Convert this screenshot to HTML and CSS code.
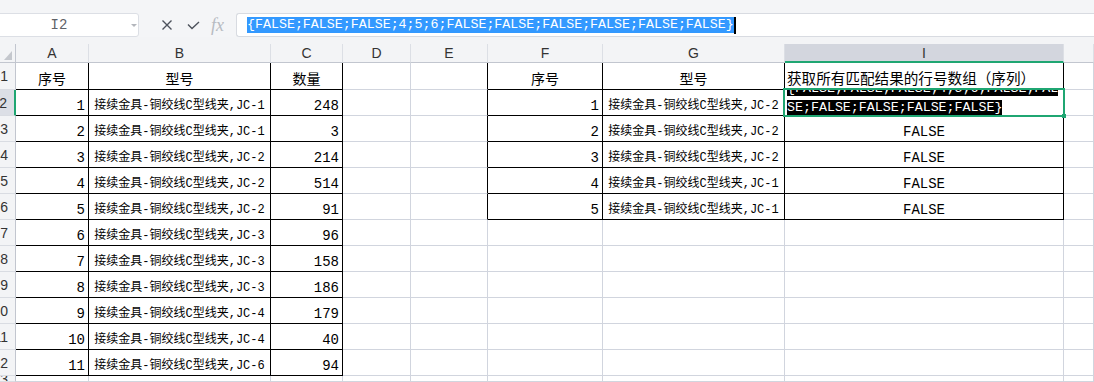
FILE: index.html
```html
<!DOCTYPE html>
<html lang="zh">
<head>
<meta charset="utf-8">
<title>Sheet</title>
<link rel="stylesheet" href="styles.css">
</head>
<body>
<div class="fbar">
  <div class="namebox">
    <span class="ref">I2</span>
    <span class="dd"><svg width="6" height="3" viewBox="0 0 6 3"><path d="M0 0H6L3 3Z" fill="#b3b6bc"/></svg></span>
  </div>
  <div class="tools">
    <svg class="x" width="12" height="12" viewBox="0 0 12 12"><path d="M1.5 1.5L10.5 10.5M10.5 1.5L1.5 10.5" stroke="#4d525c" stroke-width="1.4" fill="none"/></svg>
    <svg class="ok" width="13" height="9" viewBox="0 0 13 9"><path d="M1 3.5L5 7.5L12 1" stroke="#4d525c" stroke-width="1.4" fill="none"/></svg>
    <span class="fx">fx</span>
  </div>
  <div class="finput"><span class="sel">{FALSE;FALSE;FALSE;4;5;6;FALSE;FALSE;FALSE;FALSE;FALSE;FALSE}</span><span class="caret"></span></div>
</div>
<div class="sheet">
  <div class="row hdr">
    <div class="corner"><svg width="8" height="9" viewBox="0 0 8 9"><path d="M8 0V9H0Z" fill="#c4c7cd"/></svg></div>
    <div>A</div><div>B</div><div>C</div><div>D</div><div>E</div><div>F</div><div>G</div><div class="on">I</div><div></div>
  </div>
  <div class="row r1">
    <div class="rh">1</div>
    <div class="t ctr">序号</div>
    <div class="t ctr">型号</div>
    <div class="t ctr">数量</div>
    <div></div>
    <div class="tl"></div>
    <div class="t ctr">序号</div>
    <div class="t ctr">型号</div>
    <div class="t i1">获取所有匹配结果的行号数组（序列）</div>
    <div></div>
  </div>
  <div class="row">
    <div class="rh cur">2</div>
    <div class="t num">1</div>
    <div class="t ctr sm">接续金具-铜绞线C型线夹,JC-1</div>
    <div class="t num">248</div>
    <div></div>
    <div class="tl"></div>
    <div class="t num">1</div>
    <div class="t ctr sm">接续金具-铜绞线C型线夹,JC-2</div>
    <div class="t act"><div class="wrap"><div class="txt"><span class="hl">{FALSE;FALSE;FALSE;4;5;6;FALSE;FAL<br>SE;FALSE;FALSE;FALSE;FALSE}</span></div></div></div>
    <div></div>
  </div>
  <div class="row">
    <div class="rh">3</div>
    <div class="t num">2</div>
    <div class="t ctr sm">接续金具-铜绞线C型线夹,JC-1</div>
    <div class="t num">3</div>
    <div></div>
    <div class="tl"></div>
    <div class="t num">2</div>
    <div class="t ctr sm">接续金具-铜绞线C型线夹,JC-2</div>
    <div class="t ctr">FALSE</div>
    <div></div>
  </div>
  <div class="row">
    <div class="rh">4</div>
    <div class="t num">3</div>
    <div class="t ctr sm">接续金具-铜绞线C型线夹,JC-2</div>
    <div class="t num">214</div>
    <div></div>
    <div class="tl"></div>
    <div class="t num">3</div>
    <div class="t ctr sm">接续金具-铜绞线C型线夹,JC-2</div>
    <div class="t ctr">FALSE</div>
    <div></div>
  </div>
  <div class="row">
    <div class="rh">5</div>
    <div class="t num">4</div>
    <div class="t ctr sm">接续金具-铜绞线C型线夹,JC-2</div>
    <div class="t num">514</div>
    <div></div>
    <div class="tl"></div>
    <div class="t num">4</div>
    <div class="t ctr sm">接续金具-铜绞线C型线夹,JC-1</div>
    <div class="t ctr">FALSE</div>
    <div></div>
  </div>
  <div class="row">
    <div class="rh">6</div>
    <div class="t num">5</div>
    <div class="t ctr sm">接续金具-铜绞线C型线夹,JC-2</div>
    <div class="t num">91</div>
    <div></div>
    <div class="tl"></div>
    <div class="t num">5</div>
    <div class="t ctr sm">接续金具-铜绞线C型线夹,JC-1</div>
    <div class="t ctr">FALSE</div>
    <div></div>
  </div>
  <div class="row">
    <div class="rh">7</div>
    <div class="t num">6</div>
    <div class="t ctr sm">接续金具-铜绞线C型线夹,JC-3</div>
    <div class="t num">96</div>
    <div></div><div></div><div></div><div></div><div></div><div></div>
  </div>
  <div class="row">
    <div class="rh">8</div>
    <div class="t num">7</div>
    <div class="t ctr sm">接续金具-铜绞线C型线夹,JC-3</div>
    <div class="t num">158</div>
    <div></div><div></div><div></div><div></div><div></div><div></div>
  </div>
  <div class="row">
    <div class="rh">9</div>
    <div class="t num">8</div>
    <div class="t ctr sm">接续金具-铜绞线C型线夹,JC-3</div>
    <div class="t num">186</div>
    <div></div><div></div><div></div><div></div><div></div><div></div>
  </div>
  <div class="row">
    <div class="rh">10</div>
    <div class="t num">9</div>
    <div class="t ctr sm">接续金具-铜绞线C型线夹,JC-4</div>
    <div class="t num">179</div>
    <div></div><div></div><div></div><div></div><div></div><div></div>
  </div>
  <div class="row">
    <div class="rh">11</div>
    <div class="t num">10</div>
    <div class="t ctr sm">接续金具-铜绞线C型线夹,JC-4</div>
    <div class="t num">40</div>
    <div></div><div></div><div></div><div></div><div></div><div></div>
  </div>
  <div class="row">
    <div class="rh">12</div>
    <div class="t num">11</div>
    <div class="t ctr sm">接续金具-铜绞线C型线夹,JC-6</div>
    <div class="t num">94</div>
    <div></div><div></div><div></div><div></div><div></div><div></div>
  </div>
  <div class="row r13">
    <div class="rh">13</div>
    <div></div><div></div><div></div><div></div><div></div><div></div><div></div><div></div><div></div>
  </div>
</div>
</body>
</html>
```
FILE: styles.css
```css
* { box-sizing: border-box; margin: 0; padding: 0; }
html, body { width: 1094px; height: 382px; overflow: hidden; }
body {
  background: #f3f4f6;
  font-family: "Liberation Mono", "Noto Sans CJK SC", monospace;
  color: #000;
}

/* formula bar */
.fbar { display: flex; align-items: flex-start; height: 37px; padding-top: 13px; background: #f4f5f7; }
.namebox {
  display: flex; align-items: center;
  width: 143px; height: 24px; margin-left: -4px;
  background: #fff; border: 1px solid #dcdfe5; border-radius: 3px;
}
.ref { flex: 1; text-align: center; font-size: 14px; line-height: 16px; color: #5f6368; }
.dd { display: flex; width: 17px; padding-left: 10px; }
.tools { display: flex; align-items: center; height: 24px; }
.tools .x { margin-left: 22px; }
.tools .ok { margin-left: 14px; }
.fx {
  width: 16px; margin-left: 11px;
  font-family: "Liberation Serif", serif; font-style: italic;
  font-size: 18px; line-height: 20px; color: #b7bbc2;
}
.finput {
  flex: 1; display: flex; align-items: center;
  height: 24px; margin-left: 9px; padding-left: 10px;
  background: #fff; border: 1px solid #d8dbe1; border-right: 0; border-radius: 3px 0 0 3px;
}
.sel { background: #3399ff; color: #fff; font-size: 13.3px; line-height: 16px; white-space: pre; }
.caret { width: 2px; height: 17px; background: #000; }

/* sheet */
.sheet { margin-top: 7px; background: #fff; }
.row {
  display: grid;
  grid-template-columns: 16px 73px 182px 72px 68px 77px 115px 182px 279px 30px;
  grid-template-rows: 100%;
  height: 26px;
}
.row.r1 { height: 27px; }
.row.r13 { height: 6px; }
.row > div {
  display: flex; align-items: flex-end;
  min-height: 0;
  padding-bottom: 1px;
  overflow: hidden; white-space: nowrap;
  border-right: 1px solid #d1d5de; border-bottom: 1px solid #d1d5de;
  font-size: 14px; line-height: 16px;
}

.row.hdr { height: 19px; background: #f3f4f6; }
.row.hdr > div {
  align-items: center; justify-content: center; padding: 0;
  font-family: "Liberation Sans", sans-serif; font-size: 14px; color: #333;
  border-right-color: #dcdfe5; border-bottom-color: #c2c6cf;
}
.row.hdr > .on { background: #d3d6de; border-bottom: 2px solid #1fa672; }
.row.hdr > .corner { justify-content: flex-end; align-items: flex-end; padding: 0 3px 2px 0; border-right-color: #c2c6cf; }

.row > .rh {
  align-items: center; justify-content: flex-end;
  padding: 0 7px 0 0;
  background: #f3f4f6; color: #333;
  font-family: "Liberation Sans", sans-serif; font-size: 14px;
  border-right-color: #c2c6cf; border-bottom-color: #d9dce2;
}
.row > .cur { background: #dcdfe6; border-right: 2px solid #1fa672; }

.row > .t { border-right-color: #000; border-bottom-color: #000; }
.row > .tl { border-right-color: #000; }
.row > .num { justify-content: flex-end; padding-right: 3px; }
.row > .ctr { justify-content: center; }
.row > .sm { font-size: 12px; }
.row > .i1 { padding-left: 2px; font-size: 14.6px; }

/* active cell I2 */
.row > .act { position: relative; overflow: visible; padding: 0; }
.act .wrap {
  flex: 1; align-self: stretch; min-height: 0;
  display: flex; align-items: flex-end;
  overflow: hidden; padding-left: 2px;
}
.act .txt { flex: none; font-size: 13.3px; line-height: 19px; margin-bottom: -2px; white-space: nowrap; }
.act .hl { background: #000; color: #fff; }
.act::before {
  content: ""; position: absolute; left: -2px; top: -2px; right: -2px; bottom: -2px;
  border: 2px solid #1fa672; z-index: 2;
}
.act::after {
  content: ""; position: absolute; right: -3px; bottom: -3px;
  width: 4px; height: 4px; background: #1fa672; z-index: 3;
}
```
